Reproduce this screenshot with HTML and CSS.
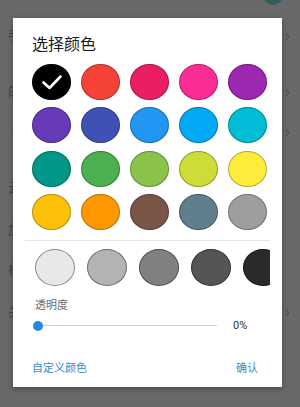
FILE: index.html
```html
<!DOCTYPE html>
<html lang="zh">
<head>
<meta charset="utf-8">
<link rel="stylesheet" href="styles.css">
</head>
<body>
<div class="page">
  <div class="row row-top"><span class="knob"></span></div>
  <div class="row r1"><span class="label">手</span><span class="chev">›</span></div>
  <div class="row r2"><span class="label">的</span><span class="chev">›</span></div>
  <div class="row r3"><span class="label">·</span><span class="chev">›</span></div>
  <div class="row r4"><span class="label">云</span></div>
  <div class="row r5"><span class="label">加</span></div>
  <div class="row r6"><span class="label">检</span></div>
  <div class="row r7"><span class="label">关</span><span class="chev">›</span></div>
</div>

<div class="dialog">
  <div class="title">选择颜色</div>
  <div class="grid">
    <div class="dot selected" style="background:#000000">
      <svg viewBox="0 0 39 36" width="39" height="36"><path d="M11.5 18.5 L17.5 24 L28.5 12.5" fill="none" stroke="#fff" stroke-width="2.6" stroke-linecap="round" stroke-linejoin="round"/></svg>
    </div>
    <div class="dot" style="background:#f44336"></div>
    <div class="dot" style="background:#e91e63"></div>
    <div class="dot" style="background:#fb2d94"></div>
    <div class="dot" style="background:#9c27b0"></div>
    <div class="dot" style="background:#673ab7"></div>
    <div class="dot" style="background:#3f51b5"></div>
    <div class="dot" style="background:#2196f3"></div>
    <div class="dot" style="background:#03a9f4"></div>
    <div class="dot" style="background:#00bcd4"></div>
    <div class="dot" style="background:#009688"></div>
    <div class="dot" style="background:#4caf50"></div>
    <div class="dot" style="background:#8bc34a"></div>
    <div class="dot" style="background:#cddc39"></div>
    <div class="dot" style="background:#ffeb3b"></div>
    <div class="dot" style="background:#ffc107"></div>
    <div class="dot" style="background:#ff9800"></div>
    <div class="dot" style="background:#795548"></div>
    <div class="dot" style="background:#607d8b"></div>
    <div class="dot" style="background:#9e9e9e"></div>
  </div>
  <div class="greys">
    <div class="gdot" style="background:#e8e8e8"></div>
    <div class="gdot" style="background:#b3b3b3"></div>
    <div class="gdot" style="background:#808080"></div>
    <div class="gdot" style="background:#555555"></div>
    <div class="gdot" style="background:#2a2a2a"></div>
    <div class="gdot" style="background:#000000"></div>
  </div>
  <div class="alpha-label">透明度</div>
  <div class="slider">
    <div class="track"><span class="thumb"></span></div>
    <span class="pct">0%</span>
  </div>
  <div class="actions">
    <span class="btn">自定义颜色</span>
    <span class="btn">确认</span>
  </div>
</div>
</body>
</html>
```
FILE: styles.css
```css
html, body {
  margin: 0;
  padding: 0;
}
body {
  width: 300px;
  height: 407px;
  overflow: hidden;
  background: #696969;
  font-family: "Noto Sans CJK SC", "Noto Sans", sans-serif;
  position: relative;
}
.page {
  display: flex;
  flex-direction: column;
}
.row {
  height: 40px;
  display: flex;
  align-items: center;
  justify-content: space-between;
  padding: 0 10px 0 8px;
  color: #434343;
  font-size: 13px;
}
.row-top {
  height: 14px;
  align-items: flex-end;
  justify-content: flex-end;
  padding-right: 17px;
}
.knob {
  width: 20px;
  height: 20px;
  border-radius: 50%;
  background: #305d5b;
  margin-bottom: 9px;
}
.r2 { margin-top: 16px; }
.r4 { margin-top: 16px; }
.r5 { margin-top: 2px; }
.r7 { margin-top: 2px; }
.chev {
  font-size: 18px;
  color: #4e4e4e;
}

.dialog {
  position: absolute;
  left: 13px;
  top: 18px;
  width: 269px;
  height: 369px;
  box-sizing: border-box;
  background: #fff;
  box-shadow: 0 2px 6px rgba(0,0,0,0.3);
  padding: 15px 0 0 19px;
  display: flex;
  flex-direction: column;
}
.title {
  font-size: 16px;
  line-height: 20px;
  color: #1a1a1a;
}
.grid {
  margin-top: 11px;
  display: grid;
  grid-template-columns: repeat(5, 39px);
  grid-auto-rows: 36px;
  column-gap: 10px;
  row-gap: 7.33px;
}
.dot {
  border-radius: 50%;
  box-shadow: inset 0 0 0 1px rgba(0,0,0,0.28);
  display: flex;
  align-items: center;
  justify-content: center;
}
.dot svg { display: block; }
.greys {
  margin: 10px 12px 0 -7px;
  border-top: 1px solid #e6e6e6;
  padding: 8px 0 0 10px;
  display: flex;
  gap: 12px;
  overflow: hidden;
}
.gdot {
  flex: none;
  width: 40px;
  height: 37px;
  border-radius: 50%;
  box-shadow: inset 0 0 0 1px rgba(0,0,0,0.4);
}
.alpha-label {
  margin: 11px 0 0 3px;
  font-size: 11px;
  line-height: 14px;
  color: #6a6a6a;
}
.slider {
  margin: 8px 0 0 1px;
  height: 14px;
  display: flex;
  align-items: center;
}
.track {
  position: relative;
  width: 179px;
  height: 1px;
  background: #cfcfcf;
  margin-left: 5px;
}
.thumb {
  position: absolute;
  left: -5px;
  top: -4.5px;
  width: 10px;
  height: 10px;
  border-radius: 50%;
  background: #2189e8;
}
.pct {
  margin-left: 16px;
  font-size: 11px;
  color: #333;
  font-family: "Roboto", "Noto Sans", sans-serif;
}
.actions {
  margin: 27px 24px 0 0;
  display: flex;
  justify-content: space-between;
  font-size: 11px;
  line-height: 14px;
  color: #3a8bcc;
}
```
